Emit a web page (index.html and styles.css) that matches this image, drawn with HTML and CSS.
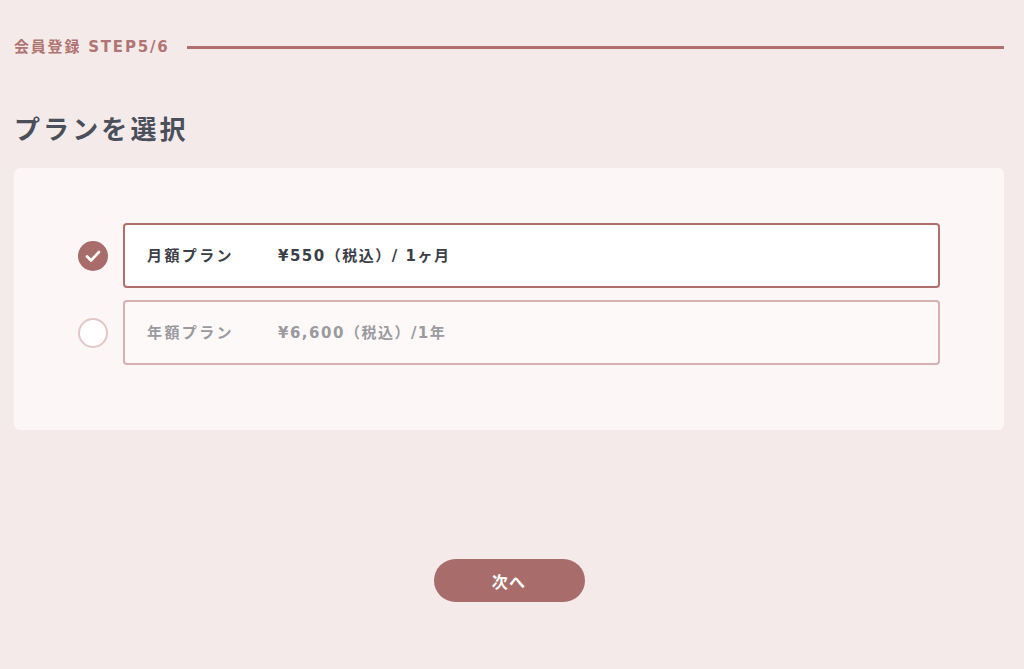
FILE: index.html
```html
<!DOCTYPE html>
<html lang="ja">
<head>
  <meta charset="UTF-8" />
  <title>会員登録 STEP5/6</title>
  <meta name="viewport" content="width=device-width, initial-scale=1.0" />
  <link rel="stylesheet" href="styles.css">
</head>
<body>

  <div class="step">
    <span class="step-label">会員登録 STEP5/6</span>
    <span class="step-line"></span>
  </div>

  <h1>プランを選択</h1>

  <div class="plans">
    <label class="plan selected">
      <span class="radio">
        <svg viewBox="0 0 30 30" width="30" height="30">
          <circle cx="15" cy="15" r="15" fill="#a86d6b"/>
          <path d="M9 15.5l4 4 8-8.5" fill="none" stroke="#fff" stroke-width="2.6" stroke-linecap="round" stroke-linejoin="round"/>
        </svg>
      </span>
      <span class="plan-box">
        <span class="plan-name">月額プラン</span>
        <span class="plan-price">¥550（税込）/ 1ヶ月</span>
      </span>
    </label>
    <label class="plan">
      <span class="radio"></span>
      <span class="plan-box">
        <span class="plan-name">年額プラン</span>
        <span class="plan-price">¥6,600（税込）/1年</span>
      </span>
    </label>
  </div>

  <div class="actions">
    <button class="next">次へ</button>
  </div>

</body>
</html>
```

FILE: styles.css
```css
* {
  margin: 0;
  padding: 0;
  box-sizing: border-box;
}

body {
  background: #f5eaea;
  font-family: 'DejaVu Sans', 'Noto Sans CJK JP', sans-serif;
  color: #4a4f5c;
  min-height: 100vh;
  padding: 36px 20px 0 14px;
}

.step {
  display: flex;
  align-items: center;
  gap: 18px;
}

.step-label {
  font-size: 15px;
  font-weight: 700;
  letter-spacing: 0.12em;
  color: #b07572;
  line-height: 22px;
}

.step-line {
  flex: 1;
  height: 3px;
  background: #b06e6c;
}

h1 {
  font-family: 'Noto Sans CJK JP', sans-serif;
  font-size: 26px;
  font-weight: 700;
  color: #4a4f5c;
  letter-spacing: 0.12em;
  margin-top: 50px;
  line-height: 40px;
}

.plans {
  margin-top: 20px;
  background: #fdf6f6;
  border-radius: 6px;
  padding: 55px 64px 65px 64px;
  display: flex;
  flex-direction: column;
  gap: 12px;
}

.plan {
  display: flex;
  align-items: center;
  gap: 15px;
  cursor: pointer;
}

.radio {
  width: 30px;
  height: 30px;
  flex: none;
  border-radius: 50%;
  border: 2px solid #e3c6c6;
  background: #fff;
}

.selected .radio {
  border: none;
  background: none;
}

.radio svg {
  display: block;
}

.plan-box {
  flex: 1;
  height: 65px;
  display: flex;
  align-items: center;
  padding: 0 22px 2px;
  border: 2px solid #d6b1b1;
  border-radius: 4px;
  background: #fdf9f9;
  color: #9a9aa0;
  font-size: 15px;
  font-weight: 700;
  letter-spacing: 0.1em;
}

.selected .plan-box {
  border-color: #b06e6c;
  background: #fff;
  color: #3c3e48;
}

.plan-name {
  width: 131px;
  letter-spacing: 0.16em;
}

.actions {
  display: flex;
  justify-content: center;
  margin-top: 129px;
}

.next {
  width: 151px;
  height: 43px;
  border: none;
  border-radius: 22px;
  background: #a86d6b;
  color: #fff;
  font-family: 'Noto Sans CJK JP', sans-serif;
  font-size: 16px;
  font-weight: 700;
  letter-spacing: 0.08em;
  cursor: pointer;
}
```
